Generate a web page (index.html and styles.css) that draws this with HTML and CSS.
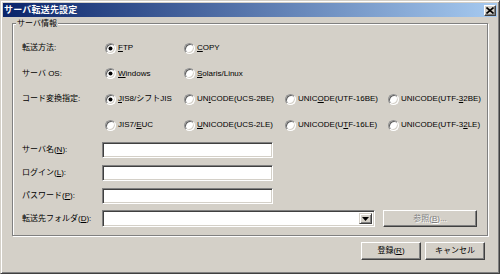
FILE: index.html
```html
<!DOCTYPE html>
<html lang="ja">
<head>
<meta charset="utf-8">
<title>サーバ転送先設定</title>
<link rel="stylesheet" href="styles.css">
</head>
<body>
<div class="window">
  <div class="titlebar">
    <span class="title">サーバ転送先設定</span>
    <span class="close"><svg width="8" height="7" viewBox="0 0 8 7"><path d="M0.5 0.5 L7.5 6.5 M7.5 0.5 L0.5 6.5" stroke="#000" stroke-width="1.6" fill="none"/></svg></span>
  </div>
  <div class="group">
    <span class="group-title">サーバ情報</span>
    <div class="row h26">
      <span class="label">転送方法:</span>
      <span class="radio checked"><span class="dot"></span><span><u>F</u>TP</span></span>
      <span class="radio"><span class="dot"></span><span><u>C</u>OPY</span></span>
    </div>
    <div class="row h25">
      <span class="label">サーバ OS:</span>
      <span class="radio checked"><span class="dot"></span><span><u>W</u>indows</span></span>
      <span class="radio"><span class="dot"></span><span><u>S</u>olaris/Linux</span></span>
    </div>
    <div class="row h26">
      <span class="label">コード変換指定:</span>
      <span class="radio checked"><span class="dot"></span><span><u>J</u>IS8/シフトJIS</span></span>
      <span class="radio"><span class="dot"></span><span>UN<u>I</u>CODE(UCS-2BE)</span></span>
      <span class="radio"><span class="dot"></span><span>UNIC<u>O</u>DE(UTF-16BE)</span></span>
      <span class="radio"><span class="dot"></span><span>UNICODE(UTF-<u>3</u>2BE)</span></span>
    </div>
    <div class="row h26">
      <span class="label"></span>
      <span class="radio"><span class="dot"></span><span>JIS7/<u>E</u>UC</span></span>
      <span class="radio"><span class="dot"></span><span><u>U</u>NICODE(UCS-2LE)</span></span>
      <span class="radio"><span class="dot"></span><span>UNICODE(U<u>T</u>F-16LE)</span></span>
      <span class="radio"><span class="dot"></span><span>UNICODE(UTF-3<u>2</u>LE)</span></span>
    </div>
    <div class="row field-row">
      <span class="label">サーバ名(<u>N</u>):</span>
      <span class="input"></span>
    </div>
    <div class="row field-row">
      <span class="label">ログイン(<u>L</u>):</span>
      <span class="input"></span>
    </div>
    <div class="row field-row">
      <span class="label">パスワード(<u>P</u>):</span>
      <span class="input"></span>
    </div>
    <div class="row combo-row">
      <span class="label">転送先フォルダ(<u>D</u>):</span>
      <span class="combo">
        <span class="combo-field"></span>
        <span class="combo-btn"><svg width="7" height="4" viewBox="0 0 7 4"><path d="M0 0 H7 L3.5 4 Z" fill="#000"/></svg></span>
      </span>
      <span class="btn browse disabled">参照(<u>B</u>)...</span>
    </div>
  </div>
  <div class="actions">
    <span class="btn">登録(<u>R</u>)</span>
    <span class="btn">キャンセル</span>
  </div>
</div>
</body>
</html>
```

FILE: styles.css
```css
* { box-sizing: border-box; }
html, body { margin: 0; padding: 0; }
body {
  width: 500px;
  height: 274px;
  background: #d4d0c8;
  font-family: "Liberation Sans", "Noto Sans CJK JP", sans-serif;
  font-size: 8px;
  color: #000;
  overflow: hidden;
}
u { text-decoration: underline; text-underline-offset: 1px; }

.window {
  width: 500px;
  height: 274px;
  border: 1px solid;
  border-color: #d4d0c8 #404040 #404040 #d4d0c8;
  box-shadow: inset 1px 1px #fff, inset -1px -1px #808080;
  padding: 2px;
  display: flex;
  flex-direction: column;
}

.titlebar {
  height: 14px;
  background: linear-gradient(to right, #0a246a, #a6caf0);
  display: flex;
  align-items: center;
  padding-left: 1px;
  padding-right: 1px;
}
.title {
  color: #fff;
  font-weight: bold;
  font-size: 9px;
  line-height: 12px;
  font-family: "Noto Sans CJK JP", sans-serif;
  letter-spacing: 0.2px;
}
.close {
  margin-left: auto;
  width: 12px;
  height: 11px;
  background: #d4d0c8;
  border: 1px solid;
  border-color: #fff #404040 #404040 #fff;
  box-shadow: inset -1px -1px #808080;
  display: flex;
  align-items: center;
  justify-content: center;
}
.close svg { display: block; }

.group {
  position: relative;
  margin: 6px 9px 0 9px;
  border: 1px solid #808080;
  box-shadow: inset 1px 1px #fff, 1px 1px #fff;
  padding: 11px 0 5px 9px;
}
.group-title {
  position: absolute;
  top: -6px;
  left: 3px;
  padding: 0 1px;
  background: #d4d0c8;
  line-height: 11px;
}

.row {
  display: grid;
  grid-template-columns: 80px 79px 101px 103px auto;
  align-items: center;
}
.h26 { height: 26px; }
.h25 { height: 25px; }
.label { line-height: 10px; white-space: nowrap; }

.radio {
  display: flex;
  align-items: center;
  padding-left: 3px;
  line-height: 10px;
  white-space: nowrap;
}
.dot {
  width: 11px;
  height: 11px;
  flex: none;
  border-radius: 50%;
  background: #fff;
  border: 1px solid;
  border-color: #909090 #fff #fff #909090;
  box-shadow: inset 1px 1px #606060, inset -1px -1px #d4d0c8;
  margin-right: 2px;
  position: relative;
}
.checked .dot::after {
  content: "";
  position: absolute;
  left: 3px;
  top: 3px;
  width: 3px;
  height: 3px;
  border-radius: 50%;
  background: #000;
  box-shadow: 0 0 0 0.5px #000;
}

.field-row {
  height: 23px;
  grid-template-columns: 80px 171px;
}
.input {
  height: 16px;
  background: #fff;
  border: 1px solid;
  border-color: #808080 #fff #fff #808080;
  box-shadow: inset 1px 1px #404040, inset -1px -1px #d4d0c8;
}

.combo-row {
  height: 23px;
  grid-template-columns: 80px 273px 102px;
}
.combo {
  height: 17px;
  display: flex;
  background: #fff;
  border: 1px solid;
  border-color: #808080 #fff #fff #808080;
  box-shadow: inset 1px 1px #404040, inset -1px -1px #d4d0c8;
  padding: 2px;
}
.combo-field { flex: 1; }
.combo-btn {
  width: 13px;
  height: 11px;
  background: #d4d0c8;
  border: 1px solid;
  border-color: #d4d0c8 #404040 #404040 #d4d0c8;
  box-shadow: inset 1px 1px #fff, inset -1px -1px #808080;
  display: flex;
  align-items: center;
  justify-content: center;
}
.combo-btn svg { display: block; }

.btn {
  height: 17px;
  background: #d4d0c8;
  border: 1px solid;
  border-color: #fff #404040 #404040 #fff;
  box-shadow: inset -1px -1px #808080;
  display: flex;
  align-items: center;
  justify-content: center;
  line-height: 10px;
  white-space: nowrap;
}
.browse { width: 94px; margin-left: 8px; }
.disabled {
  color: #808080;
  text-shadow: 1px 1px #fff;
}

.actions {
  display: flex;
  justify-content: flex-end;
  gap: 4px;
  margin-top: 6px;
  padding-right: 12px;
}
.actions .btn {
  width: 60px;
  height: 18px;
}
```
